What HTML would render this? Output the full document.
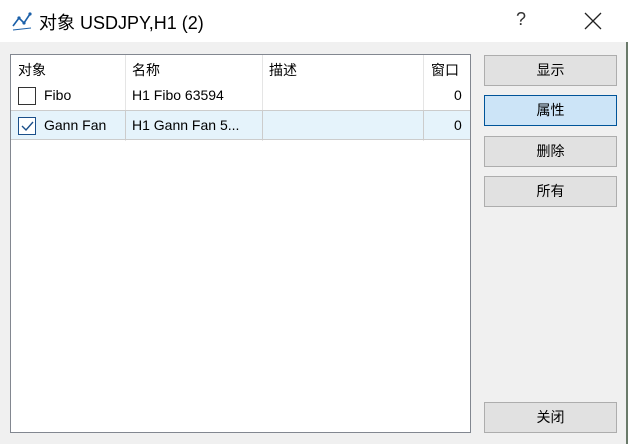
<!DOCTYPE html><html><head><meta charset="utf-8"><style>
*{margin:0;padding:0;box-sizing:border-box}
body{width:628px;height:444px;background:#f0f0f0;font-family:"Segoe UI","Liberation Sans","Noto Sans CJK SC",sans-serif;font-size:14px;color:#000;position:relative;overflow:hidden}
.t{position:absolute;left:0;top:0;width:628px;height:42px;background:#fff}
.a{position:absolute}
.lb{position:absolute;left:10px;top:54px;width:461px;height:379px;background:#fff;border:1px solid #828790}
.btn{position:absolute;left:484px;width:133px;height:31px;background:#e1e1e1;border:1px solid #adadad;text-align:center;line-height:28px}
.cb{position:absolute;width:18px;height:18px;border:1px solid #333;background:#fff}
</style></head><body>
<div class="t"></div>
<svg class="a" style="left:11px;top:10px" width="22" height="22" viewBox="0 0 22 22"><path d="M2 16 L8 8 L13 13 L19 4" fill="none" stroke="#1a5fa8" stroke-width="1.6"/><circle cx="8" cy="8" r="1.6" fill="#1a5fa8"/><circle cx="13" cy="13" r="1.6" fill="#1a5fa8"/><circle cx="19" cy="4" r="1.6" fill="#1a5fa8"/><path d="M2 20 L20 18" stroke="#1a5fa8" stroke-width="1"/></svg>
<div class="a" style="left:39px;top:9px;font-size:18px">对象 USDJPY,H1 (2)</div>
<div class="a" style="left:516px;top:9px;font-size:18px;color:#333">?</div>
<svg class="a" style="left:584px;top:12px" width="18" height="18"><path d="M1 1L17 17M17 1L1 17" stroke="#222" stroke-width="1.3"/></svg>
<div class="lb">
<div class="a" style="left:114px;top:0;width:1px;height:86px;background:#e5e5e5"></div>
<div class="a" style="left:251px;top:0;width:1px;height:86px;background:#e5e5e5"></div>
<div class="a" style="left:412px;top:0;width:1px;height:86px;background:#e5e5e5"></div>
<div class="a" style="left:0;top:55px;width:459px;height:30px;background:#e5f3fb;border-top:1px solid #ccc;border-bottom:1px solid #ccc"></div>
<div class="a" style="left:114px;top:55px;width:1px;height:30px;background:#ccc"></div>
<div class="a" style="left:251px;top:55px;width:1px;height:30px;background:#ccc"></div>
<div class="a" style="left:412px;top:55px;width:1px;height:30px;background:#ccc"></div>
<div class="a" style="left:7px;top:5px">对象</div>
<div class="a" style="left:121px;top:5px">名称</div>
<div class="a" style="left:258px;top:5px">描述</div>
<div class="a" style="left:420px;top:5px">窗口</div>
<div class="cb" style="left:7px;top:32px"></div>
<div class="a" style="left:33px;top:32px">Fibo</div>
<div class="a" style="left:121px;top:32px">H1 Fibo 63594</div>
<div class="a" style="left:443px;top:32px">0</div>
<div class="cb" style="left:7px;top:62px;border-color:#1a4f8a"><svg width="16" height="16" style="position:absolute;left:0;top:0"><path d="M3 8L7 12L14 4" fill="none" stroke="#1a4f8a" stroke-width="1.4"/></svg></div>
<div class="a" style="left:33px;top:62px">Gann Fan</div>
<div class="a" style="left:121px;top:62px">H1 Gann Fan 5...</div>
<div class="a" style="left:443px;top:62px">0</div>
</div>
<div class="btn" style="top:55px">显示</div>
<div class="btn" style="top:95px;background:#cce4f7;border-color:#005499">属性</div>
<div class="btn" style="top:136px">删除</div>
<div class="btn" style="top:176px">所有</div>
<div class="btn" style="top:402px">关闭</div>
<div class="a" style="left:626px;top:42px;width:2px;height:402px;background:#6a7a6a"></div>
</body></html>
